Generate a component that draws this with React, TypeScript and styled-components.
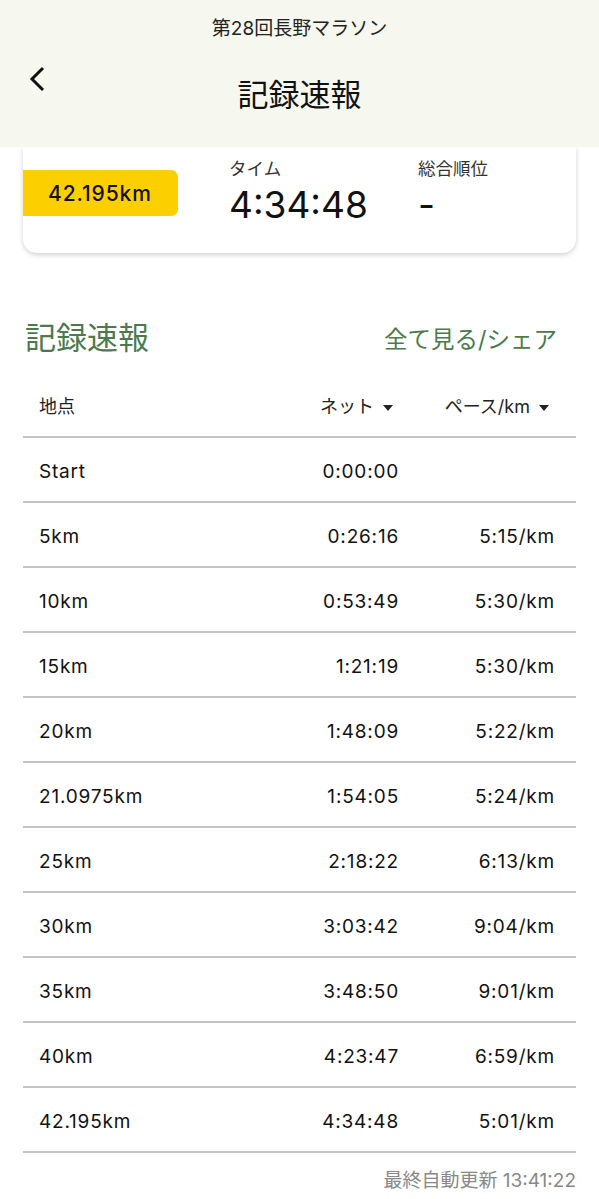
import { FunctionComponent } from "react";
import styled, { createGlobalStyle } from "styled-components";

const GlobalStyle = createGlobalStyle`
  html, body {
    margin: 0;
    padding: 0;
    background: #ffffff;
  }
  body {
    font-family: Inter, "Noto Sans CJK JP", "Noto Sans", sans-serif;
    color: #111;
  }
`;

interface Split {
  point: string;
  net: string;
  pace: string;
}

const splits: Split[] = [
  { point: "Start", net: "0:00:00", pace: "" },
  { point: "5km", net: "0:26:16", pace: "5:15/km" },
  { point: "10km", net: "0:53:49", pace: "5:30/km" },
  { point: "15km", net: "1:21:19", pace: "5:30/km" },
  { point: "20km", net: "1:48:09", pace: "5:22/km" },
  { point: "21.0975km", net: "1:54:05", pace: "5:24/km" },
  { point: "25km", net: "2:18:22", pace: "6:13/km" },
  { point: "30km", net: "3:03:42", pace: "9:04/km" },
  { point: "35km", net: "3:48:50", pace: "9:01/km" },
  { point: "40km", net: "4:23:47", pace: "6:59/km" },
  { point: "42.195km", net: "4:34:48", pace: "5:01/km" },
];

const Caret: FunctionComponent = () => (
  <svg width="10" height="6" viewBox="0 0 10 6" className="caret">
    <path d="M0 0 L10 0 L5 6 Z" fill="#222" />
  </svg>
);

const App: FunctionComponent = () => {
  return (
    <>
      <GlobalStyle />
      <Page>
        <Header>
          <div className="event">第28回長野マラソン</div>
          <div className="bar">
            <BackButton>
              <svg width="18" height="28" viewBox="0 0 18 28">
                <path
                  d="M15 3 L4 14 L15 25"
                  fill="none"
                  stroke="#111"
                  strokeWidth="3"
                />
              </svg>
            </BackButton>
            <h1 className="title">記録速報</h1>
          </div>
        </Header>

        <SummaryCard>
          <DistanceBadge>42.195km</DistanceBadge>
          <Stat $width={189}>
            <span className="label">タイム</span>
            <span className="value">4:34:48</span>
          </Stat>
          <Stat>
            <span className="label">総合順位</span>
            <span className="value">-</span>
          </Stat>
        </SummaryCard>

        <SectionHead>
          <h2>記録速報</h2>
          <span className="link">全て見る/シェア</span>
        </SectionHead>

        <SplitTable>
          <HeadRow>
            <span>地点</span>
            <span className="num">
              ネット <Caret />
            </span>
            <span className="num">
              ペース/km <Caret />
            </span>
          </HeadRow>
          {splits.map((s) => (
            <Row key={s.point}>
              <span>{s.point}</span>
              <span className="num">{s.net}</span>
              <span className="num">{s.pace}</span>
            </Row>
          ))}
        </SplitTable>

        <Updated>最終自動更新 13:41:22</Updated>
      </Page>
    </>
  );
};

const Page = styled.div`
  width: 599px;
  min-height: 1199px;
  background: #ffffff;
`;

const Header = styled.header`
  position: relative;
  z-index: 2;
  height: 147px;
  background: #f6f8ef;
  box-sizing: border-box;
  padding-top: 16px;

  .event {
    text-align: center;
    font-size: 19px;
    line-height: 26px;
    color: #222;
  }

  .bar {
    position: relative;
    display: flex;
    justify-content: center;
    margin-top: 30px;
  }

  .title {
    margin: 0;
    font-size: 31px;
    font-weight: 400;
    line-height: 46px;
    color: #111;
  }
`;

const BackButton = styled.div`
  position: absolute;
  left: 28px;
  top: -7px;
  display: flex;
`;

const SummaryCard = styled.section`
  position: relative;
  z-index: 1;
  margin: 0 23px;
  height: 106px;
  box-sizing: border-box;
  display: flex;
  align-items: flex-start;
  padding-top: 11px;
  background: #ffffff;
  border-radius: 0 0 14px 14px;
  box-shadow: 0 2px 5px rgba(0, 0, 0, 0.18);
`;

const DistanceBadge = styled.div`
  width: 155px;
  height: 46px;
  margin-top: 12px;
  margin-right: 51px;
  box-sizing: border-box;
  padding-left: 25px;
  display: flex;
  align-items: center;
  background: #fcd000;
  border-radius: 0 7px 7px 0;
  font-size: 21px;
  font-weight: 500;
  letter-spacing: 0.9px;
  color: #111;
`;

const Stat = styled.div<{ $width?: number }>`
  display: flex;
  flex-direction: column;
  width: ${({ $width }) => ($width ? `${$width}px` : "auto")};

  .label {
    font-size: 17.5px;
    line-height: 22px;
    color: #333;
  }

  .value {
    font-size: 37px;
    line-height: 50px;
    color: #111;
  }
`;

const SectionHead = styled.div`
  display: flex;
  justify-content: space-between;
  align-items: center;
  margin: 63px 42px 0 25px;

  h2 {
    margin: 0;
    font-size: 31px;
    font-weight: 400;
    line-height: 44px;
    color: #4c7a4c;
  }

  .link {
    font-size: 23.5px;
    color: #4c7a4c;
  }
`;

const SplitTable = styled.div`
  margin: 13px 23px 0;
`;

const gridCols = `
  display: grid;
  grid-template-columns: 1fr 120px 156px;
  align-items: center;
  box-sizing: border-box;
  border-bottom: 2px solid #c4c4c4;

  .num {
    text-align: right;
  }
`;

const HeadRow = styled.div`
  ${gridCols}
  height: 65px;
  padding: 0 21px 0 16px;
  font-size: 18px;
  color: #222;

  .num {
    padding-right: 6px;
  }

  .caret {
    margin-left: 4px;
    vertical-align: middle;
  }
`;

const Row = styled.div`
  ${gridCols}
  height: 65px;
  padding: 4px 21px 0 16px;
  font-size: 19px;
  letter-spacing: 0.8px;
  color: #111;
`;

const Updated = styled.div`
  text-align: right;
  padding: 12px 23px 0;
  font-size: 19px;
  color: #888;
`;

export default App;
